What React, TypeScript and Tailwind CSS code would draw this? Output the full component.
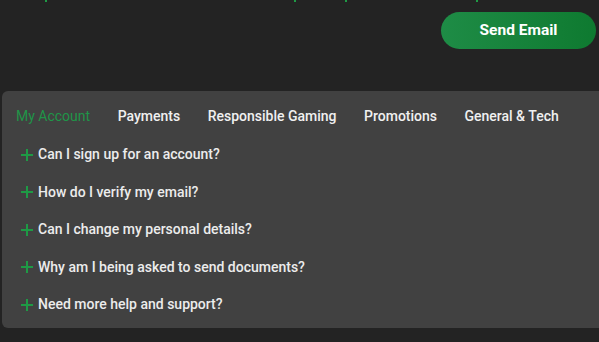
const tabs = ['My Account', 'Payments', 'Responsible Gaming', 'Promotions', 'General & Tech']

const questions = [
    'Can I sign up for an account?',
    'How do I verify my email?',
    'Can I change my personal details?',
    'Why am I being asked to send documents?',
    'Need more help and support?',
]

function PlusIcon() {
    return (
        <svg className="w-[12px] h-[12px] shrink-0" viewBox="0 0 12 12" fill="none" stroke="#1e9a45" strokeWidth={2}>
            <path d="M6 0v12M0 6h12" />
        </svg>
    )
}

export default function App() {
    return (
        <div className="w-[599px] h-[342px] overflow-hidden bg-[#232323] font-['Roboto',sans-serif]">
            {/* descenders of the line above, cut off by the viewport */}
            <div className="relative h-[2px]">
                <span className="absolute left-[45px] top-0 w-[2px] h-[2px] bg-[#1e9a45]" />
                <span className="absolute left-[294px] top-0 w-[2px] h-[2px] bg-[#1e9a45]" />
                <span className="absolute left-[345px] top-0 w-[2px] h-[2px] bg-[#1e9a45]" />
                <span className="absolute left-[476px] top-0 w-[2px] h-[2px] bg-[#1e9a45]" />
            </div>

            <div className="flex justify-end pr-[3px] pt-[10px]">
                <button className="w-[155px] h-[37px] pt-[1px] rounded-full bg-gradient-to-r from-[#1e8c46] to-[#0e7a30] text-white text-[15.5px] font-bold">
                    Send Email
                </button>
            </div>

            <div className="ml-[2px] mt-[42px] w-[620px] h-[237px] rounded-l-[6px] bg-[#414141]">
                <div className="flex items-center gap-[27.5px] pl-[14px] pt-[15px] h-[35px] text-[14px]">
                    {tabs.map((t, i) => (
                        <span
                            key={t}
                            className={i === 0 ? 'text-[#1f9548] font-normal' : 'text-[#f0f0f0] font-medium'}
                        >
                            {t}
                        </span>
                    ))}
                </div>

                <div className="flex flex-col pt-[10px]">
                    {questions.map((q) => (
                        <div key={q} className="flex items-center h-[37.5px] pl-[19px] gap-[5px]">
                            <PlusIcon />
                            <span className="text-[14px] font-medium text-[#ececec]">{q}</span>
                        </div>
                    ))}
                </div>
            </div>
        </div>
    )
}
